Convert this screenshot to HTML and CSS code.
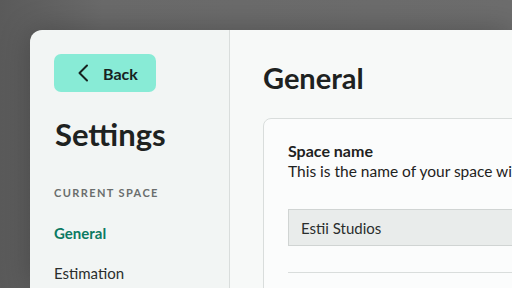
FILE: index.html
```html
<!doctype html>
<html>
    <head>
        <title>Settings - General</title>
        <link rel="stylesheet" href="styles.css">
    </head>
    <body>
        <div class="window">
            <aside class="sidebar">
                <button class="back-button">
                    <svg class="back-icon" width="12" height="18" viewBox="0 0 12 18">
                        <path d="M10 1.5 L2.5 9 L10 16.5" fill="none" stroke="currentColor" stroke-width="2" stroke-linecap="round" stroke-linejoin="round"/>
                    </svg>
                    <span>Back</span>
                </button>
                <h1 class="sidebar-title">Settings</h1>
                <div class="nav-section">Current space</div>
                <nav class="nav-list">
                    <a class="nav-item active" href="#">General</a>
                    <a class="nav-item" href="#">Estimation</a>
                </nav>
            </aside>
            <main class="content">
                <h2 class="content-title">General</h2>
                <section class="card">
                    <div class="field-label">Space name</div>
                    <div class="field-help">This is the name of your space within Estii</div>
                    <input class="field-input" type="text" value="Estii Studios" />
                    <hr class="divider" />
                </section>
            </main>
        </div>
    </body>
</html>
```

FILE: styles.css
```css
:root {
    --page-bg: #666666;
    --sidebar-bg: #f2f5f4;
    --content-bg: #f7f9f8;
    --card-bg: #fbfcfc;
    --border: #d9dddc;
    --text: #1e2221;
    --muted: #6a6e6d;
    --accent: #0b7a62;
    --back-bg: #88ebd6;
    --input-bg: #e9eceb;
}

body {
    margin: 0;
    height: 288px;
    overflow: hidden;
    background: linear-gradient(90deg, #5a5a5a 0%, #6a6a6a 20%, #6d6d6d 100%);
    font-family: 'Lato', 'Noto Sans', sans-serif;
    color: var(--text);
}

.window {
    display: flex;
    margin: 30px 0 0 30px;
    width: 482px;
    height: 258px;
    border-radius: 12px 0 0 0;
    overflow: hidden;
    box-shadow: 0 0 30px rgba(0, 0, 0, 0.25);
}

.sidebar {
    width: 175px;
    flex-shrink: 0;
    padding: 24px 0 0 24px;
    background: var(--sidebar-bg);
    border-right: 1px solid var(--border);
}

.back-button {
    all: unset;
    display: flex;
    align-items: center;
    gap: 14px;
    box-sizing: border-box;
    width: 102px;
    height: 38px;
    padding-left: 23px;
    border-radius: 7px;
    background: var(--back-bg);
    color: #17221f;
    font-size: 16px;
    font-weight: 700;
}

.back-icon {
    display: block;
}

.sidebar-title {
    margin: 23px 0 0 1px;
    font-size: 31px;
    font-weight: 700;
    line-height: 38px;
}

.nav-section {
    margin-top: 33px;
    font-size: 11px;
    font-weight: 700;
    letter-spacing: 1.4px;
    text-transform: uppercase;
    color: var(--muted);
}

.nav-list {
    display: flex;
    flex-direction: column;
    gap: 20px;
    margin-top: 24px;
}

.nav-item {
    font-size: 15px;
    line-height: 20px;
    color: #2a2e2d;
    text-decoration: none;
}

.nav-item.active {
    color: var(--accent);
    font-weight: 700;
}

.content {
    flex: 1;
    min-width: 0;
    padding: 30px 0 0 33px;
    background: var(--content-bg);
}

.content-title {
    margin: 0;
    font-size: 29px;
    font-weight: 700;
    line-height: 36px;
}

.card {
    margin-top: 22px;
    margin-right: -40px;
    padding: 22px 24px;
    border: 1px solid var(--border);
    border-radius: 8px;
    background: var(--card-bg);
    overflow: hidden;
}

.field-label {
    font-size: 16px;
    font-weight: 700;
    line-height: 20px;
}

.field-help {
    font-size: 15.5px;
    line-height: 20px;
    white-space: nowrap;
}

.field-input {
    all: unset;
    display: block;
    box-sizing: border-box;
    width: 100%;
    height: 37px;
    margin-top: 28px;
    padding: 0 12px;
    border: 1px solid #d0d4d3;
    background: var(--input-bg);
    font-family: inherit;
    font-size: 15px;
    color: #2a2e2d;
}

.divider {
    margin: 26px 0 0;
    border: 0;
    border-top: 1px solid var(--border);
}
```
